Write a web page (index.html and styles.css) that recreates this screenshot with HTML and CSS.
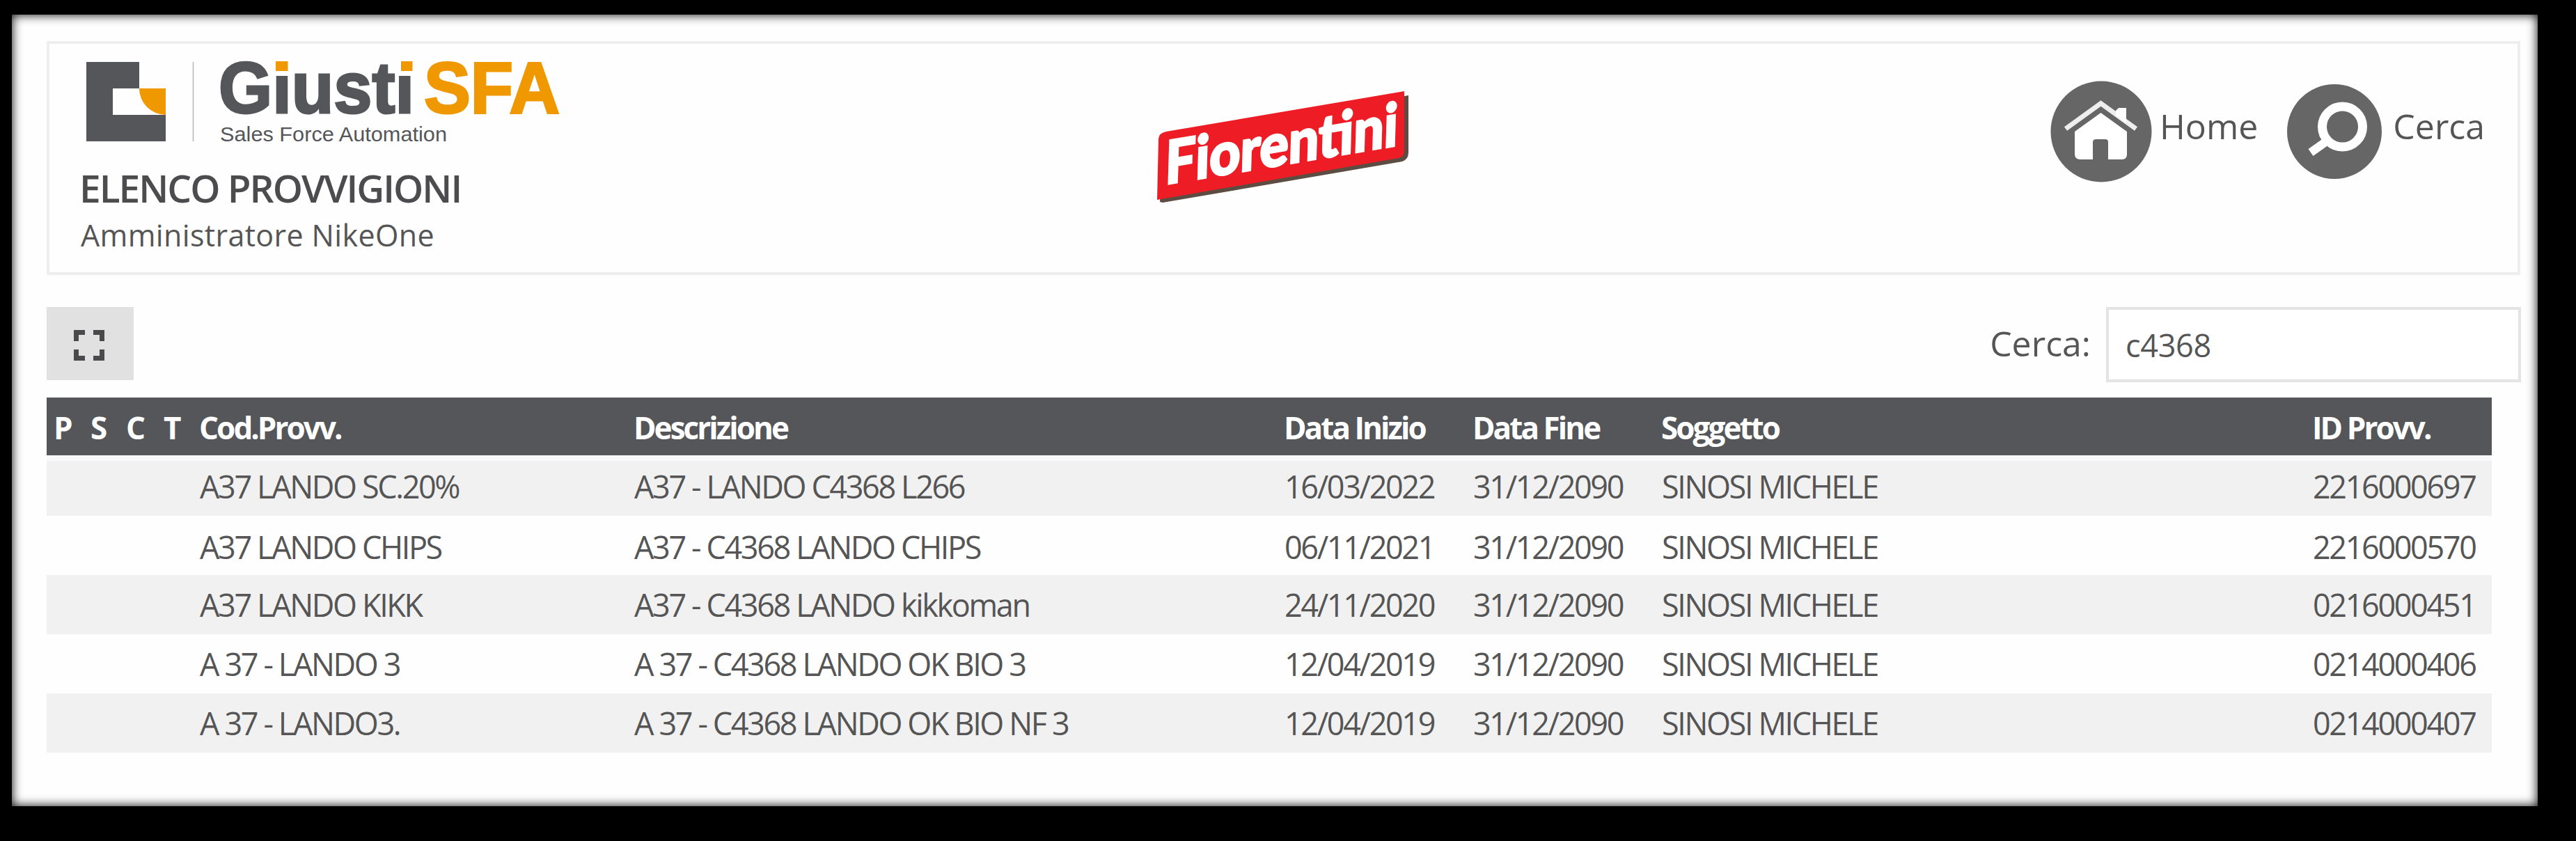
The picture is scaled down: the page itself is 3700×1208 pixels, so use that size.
FILE: index.html
```html
<!DOCTYPE html>
<html lang="it">
<head>
<meta charset="utf-8">
<title>Elenco provvigioni</title>
<link rel="stylesheet" href="styles.css">
</head>
<body>
<main class="panel">
  <header class="top">
    <div class="brand">
      <svg class="logo" width="720" height="124" viewBox="0 0 720 124" role="img" aria-label="Giusti SFA">
        <path fill="#54565a" d="M7 5H83V43H45V81H121V119H7Z"/>
        <path fill="#f09800" d="M83 43H121V81A38 38 0 0 1 83 43Z"/>
        <path stroke="#b5b6b8" stroke-width="1.5" d="M160.500 5V119"/>
        <text class="logo-name" x="197" y="77.500" textLength="281" lengthAdjust="spacingAndGlyphs">Giusti</text>
        <path fill="#fff" d="M274 0H300V25H274ZM455 0H480V25H455Z"/>
        <path fill="#f09800" d="M279 4H296.500V18H279ZM459 4H475.500V18H459Z"/>
        <text class="logo-name logo-accent" x="492" y="77.500" textLength="195" lengthAdjust="spacingAndGlyphs">SFA</text>
        <text class="logo-tag" x="199" y="119" textLength="326" lengthAdjust="spacingAndGlyphs">Sales Force Automation</text>
      </svg>
      <h1>ELENCO PROVVIGIONI</h1>
      <p class="user">Amministratore NikeOne</p>
    </div>
    <svg class="client" width="380" height="180" viewBox="0 0 380 180" role="img" aria-label="Fiorentini">
      <path class="client-shadow" d="M10 171L14 80L367 18V100Q367 110 358 113L14 172Z"/>
      <path fill="#ee1c25" d="M6 168L8 80Q9 72 19 70L361 12V98Q361 106 353 108L6 168Z"/>
      <text class="client-name" transform="matrix(1 -.168 -.03 1 17 146)" textLength="334" lengthAdjust="spacingAndGlyphs">Fiorentini</text>
    </svg>
    <nav class="links">
      <a class="link">
        <svg width="146" height="146" viewBox="0 0 146 146">
          <circle cx="73" cy="73" r="72.500" fill="#666"/>
          <path fill="none" stroke="#eee" stroke-width="7" d="M22 69L72.500 32.500L123 69"/>
          <path fill="#fff" d="M94 43L98 39H109V61L94 50Z"/>
          <path fill="#fff" d="M72.500 46L110 73V106Q110 113 102 113H83V88Q83 84 79 84H66Q61 84 61 88V113H43Q35 113 35 105V73Z"/>
        </svg>
        <span>Home</span>
      </a>
      <a class="link link-search">
        <svg width="136" height="136" viewBox="0 0 136 136">
          <circle cx="68" cy="68" r="68" fill="#666"/>
          <circle cx="79.500" cy="61" r="29" fill="none" stroke="#fff" stroke-width="13"/>
          <path stroke="#fff" stroke-width="12" d="M58 81L34 98"/>
        </svg>
        <span>Cerca</span>
      </a>
    </nav>
  </header>

  <div class="toolbar">
    <button class="expand" aria-label="Schermo intero">
      <svg width="46" height="46" viewBox="0 0 46 46" fill="none" stroke="#4a4a4c" stroke-width="7">
        <path d="M4.500 17V4.500H17M29 4.500H41.500V17M41.500 29V41.500H29M17 41.500H4.500V29"/>
      </svg>
    </button>
    <label class="search"><span>Cerca:</span><input type="text" value="c4368"></label>
  </div>

  <table class="grid">
    <colgroup><col class="c-p"><col class="c-s"><col class="c-c"><col class="c-t"><col class="c-code"><col class="c-desc"><col class="c-date"><col class="c-date"><col class="c-subj"><col class="c-id"></colgroup>
    <thead>
      <tr><th>P</th><th>S</th><th>C</th><th>T</th><th>Cod.Provv.</th><th>Descrizione</th><th>Data Inizio</th><th>Data Fine</th><th>Soggetto</th><th>ID Provv.</th></tr>
    </thead>
    <tbody>
      <tr class="first"><td></td><td></td><td></td><td></td><td>A37 LANDO SC.20%</td><td>A37 - LANDO C4368 L266</td><td>16/03/2022</td><td>31/12/2090</td><td>SINOSI MICHELE</td><td>2216000697</td></tr>
      <tr class="second"><td></td><td></td><td></td><td></td><td>A37 LANDO CHIPS</td><td>A37 - C4368 LANDO CHIPS</td><td>06/11/2021</td><td>31/12/2090</td><td>SINOSI MICHELE</td><td>2216000570</td></tr>
      <tr><td></td><td></td><td></td><td></td><td>A37 LANDO KIKK</td><td>A37 - C4368 LANDO kikkoman</td><td>24/11/2020</td><td>31/12/2090</td><td>SINOSI MICHELE</td><td>0216000451</td></tr>
      <tr><td></td><td></td><td></td><td></td><td>A 37 - LANDO 3</td><td>A 37 - C4368 LANDO OK BIO 3</td><td>12/04/2019</td><td>31/12/2090</td><td>SINOSI MICHELE</td><td>0214000406</td></tr>
      <tr><td></td><td></td><td></td><td></td><td>A 37 - LANDO3.</td><td>A 37 - C4368 LANDO OK BIO NF 3</td><td>12/04/2019</td><td>31/12/2090</td><td>SINOSI MICHELE</td><td>0214000407</td></tr>
    </tbody>
  </table>
</main>
</body>
</html>
```
FILE: styles.css
```css
* { box-sizing: border-box; }

body {
  margin: 0;
  padding: 21px 0 0 17px;
  height: 1208px;
  overflow: hidden;
  background: #000;
  color: #555;
  font-family: "Open Sans", "Noto Sans", sans-serif;
}

.panel {
  width: 3628px;
  height: 1137px;
  padding: 38px 24px 0 50px;
  background: #fefefe;
  box-shadow: inset 0 0 15px #000;
}

.top {
  display: grid;
  grid-template-columns: 1585px 1289px 1fr;
  align-items: start;
  width: 3553px;
  height: 336px;
  border: 4px solid #eee;
}

.brand { padding: 21px 0 0 46px; }
.logo {
  display: block;
  overflow: visible;
}
.logo-name {
  fill: #54565a;
  stroke: #54565a;
  stroke-width: 3px;
  font: 700 103px "Liberation Sans", Arial, sans-serif;
}
.logo-accent {
  fill: #f09800;
  stroke: #f09800;
}
.logo-tag {
  fill: #54565a;
  font: 29px "Liberation Sans", Arial, sans-serif;
}

h1 {
  margin: 32px 0 8px -3px;
  font-size: 55px;
  line-height: 60px;
  font-weight: 600;
  letter-spacing: -2px;
  color: #4c4c4e;
}

.user {
  margin: 0 0 0 -1px;
  font-size: 43px;
  line-height: 60px;
  letter-spacing: .35px;
}

.client {
  margin-top: 56px;
  overflow: visible;
}
.client-shadow { fill: #5c4c42; }
.client-name {
  fill: #fff;
  stroke: #fff;
  stroke-width: 3px;
  font: 900 86px Lato, sans-serif;
}

.links {
  display: flex;
  align-items: center;
  gap: 42px;
  padding-top: 53px;
  font-size: 50px;
  line-height: 60px;
}
.link {
  display: flex;
  align-items: center;
  gap: 11px;
}
.link-search { gap: 16px; }
.link svg { flex: none; }
.link span { padding-bottom: 16px; }

.toolbar {
  display: flex;
  justify-content: space-between;
  align-items: flex-start;
  width: 3554px;
  height: 108px;
  margin-top: 46px;
}
.expand {
  display: flex;
  align-items: center;
  justify-content: center;
  width: 125px;
  height: 105px;
  padding: 5px 4px 0 0;
  border: 0;
  background: #e1e1e1;
}
.search {
  display: flex;
  align-items: center;
  gap: 22px;
  font-size: 50px;
}
.search span { padding-bottom: 4px; }
.search input {
  width: 596px;
  height: 108px;
  padding: 0 24px;
  border: 4px solid #e4e4e4;
  background: #fff;
  color: #555;
  font: 45px "Open Sans", "Noto Sans", sans-serif;
  letter-spacing: -.3px;
}

.grid {
  table-layout: fixed;
  width: 3512px;
  margin-top: 22px;
  border-collapse: separate;
  border-spacing: 0;
}
.c-p { width: 53px; }
.c-s { width: 51px; }
.c-c { width: 54px; }
.c-t { width: 51px; }
.c-code { width: 624px; }
.c-desc { width: 934px; }
.c-date { width: 271px; }
.c-subj { width: 935px; }
.c-id { width: 268px; }

.grid th {
  height: 83px;
  padding: 2px 0 0 10px;
  background: #54565a;
  color: #fff;
  font-size: 44px;
  font-weight: 700;
  line-height: 60px;
  letter-spacing: -2.95px;
  text-align: left;
  white-space: nowrap;
}
.grid td {
  height: 85px;
  padding: 0 0 0 11px;
  font-size: 45px;
  line-height: 60px;
  letter-spacing: -2.38px;
  white-space: nowrap;
}
.grid tbody tr:nth-child(odd) { background: #f1f1f1; }
.grid .first td {
  height: 87px;
  padding-bottom: 5px;
  border-top: 8px solid #f9f9fc;
}
.grid .second td { padding-top: 4px; }
```
